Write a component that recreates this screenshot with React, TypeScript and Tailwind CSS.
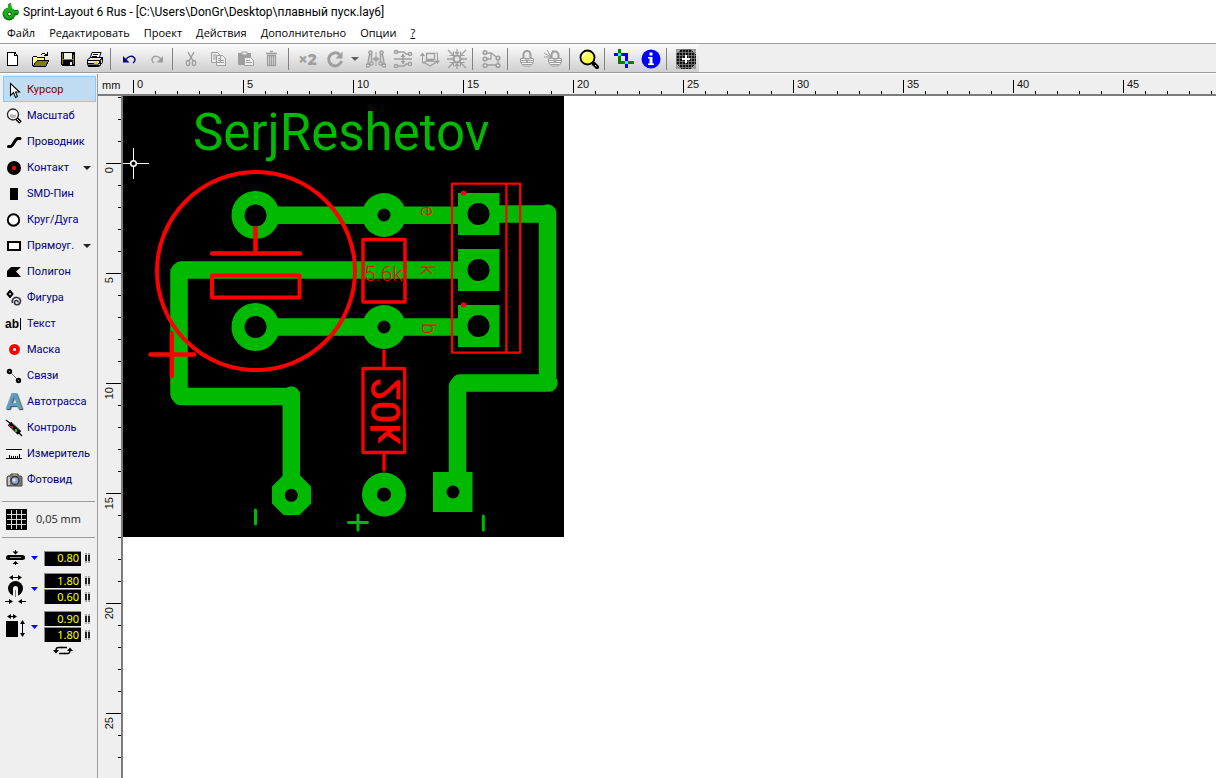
import React from 'react';
import clsx from 'clsx';

const GREEN = '#00b900';
const RED = '#ff0000';
const GREY = '#9e9e9e';

const MENU = ['Файл', 'Редактировать', 'Проект', 'Действия', 'Дополнительно', 'Опции'];

interface IIconProps {
  size?: number;
  crisp?: boolean;
  children: React.ReactNode;
}

const Icon: React.FC<IIconProps> = ({ size = 20, crisp = false, children }) => (
  <svg
    width={size}
    height={size}
    viewBox={`0 0 ${size} ${size}`}
    fill="none"
    stroke="none"
    shapeRendering={crisp ? 'crispEdges' : 'auto'}
    aria-hidden="true"
    className="shrink-0"
  >
    {children}
  </svg>
);

/* ---------- toolbar icons, 20x20 ---------- */

const NewIcon = () => (
  <Icon crisp>
    <path d="M4 4h7l3 3v9H4z" fill="#fff" />
    <path d="M4 3h8v1H4zM3 3h1v13H3zM3 16h11v1H3zM13 7h1v9h-1zM10 4h1v3h-1zM11 4h1v1h-1zM12 5h1v2h-1zM11 6h3v1h-3z" fill="#000" />
  </Icon>
);

const OpenIcon = () => (
  <Icon crisp>
    <path d="M2 8h4l1 1h7v3H7l-5 5z" fill="#ffff80" />
    <path d="M6 12h12l-3 5H3z" fill="#808000" />
    <path d="M2 7h4v1H2zM1 8h1v9H1zM6 8h8v1H6zM13 8h1v4h-1zM6 11h12v1H6zM2 17h13v1H2zM5 12h1v1H5zM4 13h1v1H4zM3 14h1v2H3zM2 16h1v1H2zM17 12h1v1h-1zM16 13h1v2h-1zM15 15h1v2h-1z" fill="#000" />
    <path d="M10 5h1v1h-1zM11 4h3v1h-3zM14 5h1v1h-1zM13 6h4v1h-4zM16 3h1v4h-1zM15 5h1v1h-1z" fill="#000" />
  </Icon>
);

const SaveIcon = () => (
  <Icon crisp>
    <path d="M3 3h14v14H4l-1-1z" fill="#000" />
    <path d="M4 4h1v11H4zM15 6h1v9h-1zM5 10h10v1H5z" fill="#808000" />
    <path d="M6 4h8v6H6z" fill="#efefef" />
    <path d="M12 13h2v3h-2z" fill="#efefef" />
  </Icon>
);

const PrintIcon = () => (
  <Icon>
    <path d="M7 3.5h9l-2 6H5z" fill="#fff" stroke="#000" />
    <path d="M8 5.5h5M7 7.5h5" stroke="#000" />
    <path d="M2.5 10.5l3-2h12l-2 3v5l-2 1h-10l-1-2z" fill="#e5e5e5" stroke="#000" />
    <path d="M2.5 11.5h12v3h-12M14.5 11.5l3-3v5l-3 3" stroke="#000" />
    <path d="M9 13h4v2H9z" fill="#d9d900" />
    <path d="M3 16.5h11" stroke="#000" strokeWidth="2" />
  </Icon>
);

const UndoIcon = () => (
  <Icon>
    <path d="M6 10.5c2-3.5 6-4 8-2s1 4-1 5.5" stroke="#000080" strokeWidth="1.4" />
    <path d="M3 7v6.500h6.500z" fill="#000080" />
  </Icon>
);

const RedoIcon = () => (
  <Icon>
    <path d="M14 10.5c-2-3.500-6-4-8-2s-1 4 1 5.500" stroke={GREY} strokeWidth="1.4" />
    <path d="M16 7v6.500h-6.500z" fill={GREY} />
  </Icon>
);

const CutIcon = () => (
  <Icon>
    <path d="M6 3l5 9M12 3l-5 9" stroke={GREY} strokeWidth="1.5" />
    <ellipse cx="6" cy="14" rx="1.7" ry="2.5" stroke={GREY} strokeWidth="1.3" />
    <ellipse cx="12" cy="14" rx="1.7" ry="2.5" stroke={GREY} strokeWidth="1.3" />
  </Icon>
);

const CopyIcon = () => (
  <Icon>
    <path d="M2.5 3.5h6l3 3v7h-9zM7.5 6.5h6l3 3v7h-9z" fill="#ededed" stroke={GREY} />
    <path d="M4 6h3M4 8h3M4 10h3M9 9.5h3M9 11.5h6M9 13.5h6" stroke={GREY} />
  </Icon>
);

const PasteIcon = () => (
  <Icon>
    <path d="M2 4h13v12H2z" fill={GREY} />
    <path d="M6 3h5v3H6z" fill="#ededed" stroke={GREY} />
    <path d="M8.5 8.5h6l3 3v5h-9z" fill="#ededed" stroke={GREY} />
    <path d="M10 11.5h4M10 13.5h6" stroke={GREY} />
  </Icon>
);

const TrashIcon = () => (
  <Icon>
    <path d="M3 4.5h11M7 2.5h3M4 6.5h9" stroke={GREY} strokeWidth="1.5" />
    <path d="M4.5 7v9.5h8V7M6.5 7v9M8.5 7v9M10.5 7v9" stroke={GREY} strokeWidth="1.3" />
  </Icon>
);

const RotateIcon = () => (
  <Icon>
    <path d="M14.5 5.500A6.500 6.500 0 1 0 16.500 12" stroke={GREY} strokeWidth="3" />
    <path d="M17.500 2.500v7h-7z" fill={GREY} />
  </Icon>
);

const MirrorHIcon = () => (
  <Icon>
    <path d="M4 4c-1 4-2 8-2 11M5.5 5v9M16 4c1 4 2 8 2 11M14.5 5v9" stroke={GREY} strokeWidth="1.5" />
    <g stroke={GREY} strokeWidth="1.5" fill="#efefef">
      <circle cx="4.5" cy="3.500" r="1.6" />
      <circle cx="15.5" cy="3.500" r="1.6" />
      <circle cx="2" cy="16.500" r="1.6" />
      <circle cx="5.5" cy="14.500" r="1.6" />
      <circle cx="18" cy="16.500" r="1.6" />
      <circle cx="14.5" cy="14.500" r="1.6" />
    </g>
    <path d="M10 3v14M7 10h6" stroke={GREY} />
    <path d="M9.500 7.500v5L6.500 10zM10.500 7.500v5l3-2.500z" fill={GREY} />
  </Icon>
);

const MirrorVIcon = () => (
  <Icon>
    <path d="M3 3h8l2 2h3M3 17h8l2-2h3M1 10h18M10 5v10" stroke={GREY} strokeWidth="1.5" />
    <g stroke={GREY} strokeWidth="1.5" fill="#efefef">
      <circle cx="3" cy="3" r="1.6" />
      <circle cx="17" cy="5" r="1.6" />
      <circle cx="3" cy="17" r="1.6" />
      <circle cx="17" cy="15" r="1.6" />
    </g>
    <path d="M7.5 8h5L10 5zM7.5 12h5L10 15z" fill={GREY} />
  </Icon>
);

const FlipIcon = () => (
  <Icon>
    <path d="M6.5 4.5h8v6h-8zM4 13.5l6 3.500 6-3.500-3-1.500H7z" stroke={GREY} strokeWidth="1.3" />
    <path d="M2.5 5v9h2M17.5 14V4h-2" stroke={GREY} />
    <path d="M0 7l2.500-3.500L5 7zM15 11.500h5L17.500 15z" fill={GREY} />
  </Icon>
);

const SnapIcon = () => (
  <Icon>
    <path d="M0 10h6M14 10h6" stroke={GREY} strokeWidth="1.5" />
    <circle cx="10" cy="10" r="3.5" stroke={GREY} strokeWidth="2.2" />
    <path d="M1 1l5 5M6.500 2.500v4h-4M19 1l-5 5M13.500 2.500v4h4M1 19l5-5M2.500 13.500h4v4M19 19l-5-5M17.500 13.500h-4v4M10 0v5M8 3l2 2 2-2M10 20v-5M8 17l2-2 2 2" stroke={GREY} strokeWidth="1.2" />
  </Icon>
);

const NetIcon = () => (
  <Icon>
    <path d="M4 4h5l7 5v7H4M4 10h5V4" stroke={GREY} strokeWidth="1.3" />
    <g stroke={GREY} strokeWidth="1.6" fill="#efefef">
      <circle cx="3" cy="3.500" r="1.8" />
      <circle cx="3" cy="10" r="1.8" />
      <circle cx="3" cy="16.500" r="1.8" />
      <circle cx="16" cy="9" r="1.8" />
      <circle cx="16" cy="16.500" r="1.8" />
    </g>
  </Icon>
);

const LockIcon = () => (
  <Icon>
    <path d="M6.500 9V5.500a3.500 3.500 0 0 1 7 0V9" stroke={GREY} strokeWidth="2" />
    <path d="M3.500 9.500h13v4l-3 3.500h-7l-3-3.500z" fill="#f4f4f4" stroke={GREY} />
    <path d="M4 11.500h12M4 13.500h12M6 15.500h8" stroke={GREY} />
    <path d="M8 10.500h4l-2 4z" fill={GREY} />
  </Icon>
);

const UnlockIcon = () => (
  <Icon>
    <path d="M7.500 9V6a3.500 3.500 0 0 1 7 0v3" stroke={GREY} strokeWidth="2" />
    <path d="M4.500 9.500h13v4l-3 3.500h-7l-3-3.500z" fill="#f4f4f4" stroke={GREY} />
    <path d="M5 11.500h12M5 13.500h12M7 15.500h8M0 4l7 4M3 1l4 7M0 8h7M9 1L7 8" stroke={GREY} />
    <path d="M9 10.500h4l-2 4z" fill={GREY} />
  </Icon>
);

const ZoomIcon = () => (
  <Icon>
    <path d="M14.500 14.500l3.500 3.500" stroke="#000" strokeWidth="4" strokeLinecap="round" />
    <path d="M16 16l1.500 1.500" stroke="#fff" />
    <circle cx="8.500" cy="8.500" r="7" fill="#ffff50" stroke="#000" strokeWidth="1.8" />
    <path d="M4 8a5 5 0 0 1 4-4" stroke="#fff" strokeWidth="1.5" />
  </Icon>
);

const CrossIcon = () => (
  <Icon crisp>
    <path d="M4 0h3v12h13v3H4z" fill="#008000" />
    <path d="M0 4h14v15h-3V7H0z" fill="#0000ff" />
    <path d="M4 4h3v3H4zM11 12h3v3h-3z" fill="#00ffff" />
  </Icon>
);

const InfoIcon = () => (
  <Icon>
    <circle cx="10" cy="10" r="9.500" fill="#0000ff" />
    <path d="M8.500 3.500h3v3h-3zM7 8h4.500v6.500H13V16H7v-1.500h1.500v-5H7z" fill="#fff" />
  </Icon>
);

const RASTER_LINES = [0, 3, 6, 9, 12, 15, 18];

const RasterIcon = () => (
  <Icon crisp>
    <path d="M0 0h20v20H0z" fill="#a8a8a8" />
    <path d="M6 0h8l3 2 3 4v8l-3 4-3 2H6l-3-2-3-4V6l3-4z" fill="#101010" />
    {RASTER_LINES.map((p) => (
      <path key={p} d={`M${p} 0h1v20h-1zM0 ${p}h20v1H0z`} fill="#8c8c8c" fillOpacity="0.7" />
    ))}
    <path d="M9 6h2v8H9zM6 9h8v2H6z" fill="#fff" />
  </Icon>
);

/* ---------- side bar icons, 18x18 ---------- */

const CursorIcon = () => (
  <Icon size={18}>
    <path d="M5.500 2.500v12l3-3 2 5 2-1-2-4.500h4z" fill="#fff" stroke="#000" strokeWidth="1.1" />
  </Icon>
);

const LoupeIcon = () => (
  <Icon size={18}>
    <path d="M11.500 11.500l4 4" stroke="#000" strokeWidth="3.500" />
    <path d="M12 12l3 3" stroke="#fff" />
    <circle cx="8" cy="7.500" r="5.500" fill="#fff" stroke="#222" strokeWidth="1.3" />
    <path d="M4.500 8l2-1 3 1 2-1-1 3.500-2.500 1-2.500-1z" fill="#b8b8b8" />
  </Icon>
);

const TrackIcon = () => (
  <Icon size={18}>
    <path d="M3.500 13.500h2.500C9 12 9 7 12.500 5.500H15" stroke="#000" strokeWidth="3" strokeLinecap="round" />
  </Icon>
);

const PadIcon = () => (
  <Icon size={18}>
    <circle cx="9" cy="9" r="7" fill="#000" />
    <circle cx="9" cy="9" r="2.2" fill={RED} />
  </Icon>
);

const SmdIcon = () => (
  <Icon size={18} crisp>
    <path d="M5 3h8v12H5z" fill="#000" />
  </Icon>
);

const CircleIcon = () => (
  <Icon size={18}>
    <circle cx="8.500" cy="9" r="5.700" fill="#fff" stroke="#000" strokeWidth="1.9" />
  </Icon>
);

const RectIcon = () => (
  <Icon size={18} crisp>
    <path d="M3 5h12v8H3z" fill="#fff" stroke="#000" strokeWidth="2" />
  </Icon>
);

const PolygonIcon = () => (
  <Icon size={18}>
    <path d="M6 4h10l-5 4.500 5 5.500H2V8z" fill="#000" />
  </Icon>
);

const FigureIcon = () => (
  <Icon size={18}>
    <path d="M5 2l2.500 3L5 8 2.500 5z" fill="#fff" stroke="#000" strokeWidth="2" />
    <path d="M7.500 14c-1-3.500 1.500-6 4.500-5.500s4.500 3 3 5.500-5.500 2.500-5.500-.5 4-2.500 3.500 0" stroke="#334" strokeWidth="1.6" />
  </Icon>
);

const TextIcon = () => (
  <span className="flex h-3 w-4 shrink-0 items-center border-r border-black font-['Liberation_Sans'] text-xs font-bold text-black">
    ab
  </span>
);

const MaskIcon = () => (
  <Icon size={18}>
    <circle cx="9.500" cy="8.500" r="6.500" fill="#fff" />
    <circle cx="9.500" cy="8.500" r="3.500" fill="#fff" stroke={RED} strokeWidth="4" />
  </Icon>
);

const LinksIcon = () => (
  <Icon size={18}>
    <path d="M4.500 4.500l9 9" stroke="#777" />
    <circle cx="4.500" cy="4.500" r="1.7" fill="#999" stroke="#000" strokeWidth="2" />
    <circle cx="13.500" cy="13.500" r="1.7" fill="#999" stroke="#000" strokeWidth="2" />
  </Icon>
);

const AutorouteIcon = () => (
  <span className="w-[18px] shrink-0 text-center font-['DejaVu_Sans'] text-[22px] leading-none font-bold text-[#5b9cc9] [text-shadow:1px_1px_1px_#444]">
    A
  </span>
);

const ProbeIcon = () => (
  <Icon size={18}>
    <path d="M1 1l5 4" stroke="#000" strokeWidth="1.3" />
    <path d="M4.500 4.500l10 9.500" stroke="#000" strokeWidth="5" />
    <path d="M4 6l8 9M7 4l9 8" stroke="#777" />
    <path d="M13 13l4 4" stroke="#000" strokeWidth="1.5" />
    <path d="M6 7h2v2H6z" fill={RED} />
    <path d="M10 10h2v3h-2z" fill="#00d000" />
  </Icon>
);

const MeterIcon = () => (
  <Icon size={18} crisp>
    <path d="M1 4h16v1H1zM1 13h16v1H1zM4 10h1v3H4zM6 11h1v2H6zM8 11h1v2H8zM10 11h1v2h-1zM12 11h1v2h-1zM14 9h1v4h-1z" fill="#000" />
    <path d="M1 5h16v4H1z" fill="#fff" />
  </Icon>
);

const CameraIcon = () => (
  <Icon size={18}>
    <path d="M6 3h7l1 2h2l1 1v9H2V6l1-1h2z" fill="#7d7d78" stroke="#444" />
    <path d="M3 6h2v8H3z" fill="#c5c5b8" />
    <circle cx="10" cy="9.500" r="4" fill="#8fa8d0" stroke="#333" strokeWidth="1.3" />
    <circle cx="9" cy="9" r="1.5" fill="#dce8ff" />
    <path d="M8 4h4" stroke="#e0b050" />
  </Icon>
);

interface ITool {
  label: string;
  icon: React.FC;
  hasMenu?: boolean;
}

const TOOLS: ITool[] = [
  { label: 'Курсор', icon: CursorIcon },
  { label: 'Масштаб', icon: LoupeIcon },
  { label: 'Проводник', icon: TrackIcon },
  { label: 'Контакт', icon: PadIcon, hasMenu: true },
  { label: 'SMD-Пин', icon: SmdIcon },
  { label: 'Круг/Дуга', icon: CircleIcon },
  { label: 'Прямоуг.', icon: RectIcon, hasMenu: true },
  { label: 'Полигон', icon: PolygonIcon },
  { label: 'Фигура', icon: FigureIcon },
  { label: 'Текст', icon: TextIcon },
  { label: 'Маска', icon: MaskIcon },
  { label: 'Связи', icon: LinksIcon },
  { label: 'Автотрасса', icon: AutorouteIcon },
  { label: 'Контроль', icon: ProbeIcon },
  { label: 'Измеритель', icon: MeterIcon },
  { label: 'Фотовид', icon: CameraIcon },
];

const Separator = () => <div className="mr-[5px] ml-[2px] h-[22px] w-px shrink-0 bg-[#808080]" />;

interface IToolButtonProps {
  title: string;
  children: React.ReactNode;
}

const ToolButton: React.FC<IToolButtonProps> = ({ title, children }) => (
  <button type="button" aria-label={title} className="flex h-6 w-[27px] shrink-0 items-center justify-center">
    {children}
  </button>
);

const Toolbar = () => (
  <div className="flex h-[30px] shrink-0 border-t border-b border-[#9c9c9c] bg-[#efefef]">
    <div className="flex items-center bg-linear-to-b from-[#fcfcfc] to-[#cfcfcf] pt-[2px]">
      <ToolButton title="Новый"><NewIcon /></ToolButton>
      <ToolButton title="Открыть"><OpenIcon /></ToolButton>
      <ToolButton title="Сохранить"><SaveIcon /></ToolButton>
      <ToolButton title="Печать"><PrintIcon /></ToolButton>
      <Separator />
      <ToolButton title="Отменить"><UndoIcon /></ToolButton>
      <ToolButton title="Повторить"><RedoIcon /></ToolButton>
      <Separator />
      <ToolButton title="Вырезать"><CutIcon /></ToolButton>
      <ToolButton title="Копировать"><CopyIcon /></ToolButton>
      <ToolButton title="Вставить"><PasteIcon /></ToolButton>
      <ToolButton title="Удалить"><TrashIcon /></ToolButton>
      <Separator />
      <ToolButton title="Дублировать">
        <span className="font-['Open_Sans'] text-base leading-none font-extrabold text-[#9e9e9e]">×2</span>
      </ToolButton>
      <ToolButton title="Повернуть"><RotateIcon /></ToolButton>
      <button type="button" aria-label="Угол поворота" className="flex w-[14px] justify-center">
        <svg width="8" height="4" viewBox="0 0 8 4" aria-hidden="true"><path d="M0 0h8L4 4z" fill="#606060" /></svg>
      </button>
      <ToolButton title="Зеркало по горизонтали"><MirrorHIcon /></ToolButton>
      <ToolButton title="Зеркало по вертикали"><MirrorVIcon /></ToolButton>
      <ToolButton title="Сменить сторону"><FlipIcon /></ToolButton>
      <ToolButton title="Привязать к сетке"><SnapIcon /></ToolButton>
      <Separator />
      <ToolButton title="Соединения"><NetIcon /></ToolButton>
      <Separator />
      <ToolButton title="Группировать"><LockIcon /></ToolButton>
      <ToolButton title="Разгруппировать"><UnlockIcon /></ToolButton>
      <Separator />
      <ToolButton title="Масштаб"><ZoomIcon /></ToolButton>
      <Separator />
      <ToolButton title="Обновить"><CrossIcon /></ToolButton>
      <ToolButton title="Информация"><InfoIcon /></ToolButton>
      <Separator />
      <ToolButton title="Шаблон"><RasterIcon /></ToolButton>
    </div>
  </div>
);

interface IValueProps {
  label: string;
  value: string;
}

const ValueField: React.FC<IValueProps> = ({ label, value }) => (
  <div className="flex items-center gap-1">
    <input
      aria-label={label}
      defaultValue={value}
      className="h-[15px] w-[37px] border-t border-l border-t-[#888] border-l-[#888] bg-black pr-[2px] pb-[2px] text-right font-['Noto_Sans'] text-[11px] leading-none text-[#ffff00]"
    />
    <svg width="5" height="10" viewBox="0 0 5 10" shapeRendering="crispEdges" aria-hidden="true">
      <path d="M0 0h2v10H0zM3 0h2v10H3z" fill="#a8a8a8" />
      <path d="M0 2h2v6H0zM3 2h2v6H3z" fill="#222" />
    </svg>
  </div>
);

interface IParamRowProps {
  icon: React.ReactNode;
  title: string;
  fields: IValueProps[];
}

const ParamRow: React.FC<IParamRowProps> = ({ icon, title, fields }) => (
  <div className="flex items-center pl-[5px]">
    <div className="w-[22px]">{icon}</div>
    <button type="button" aria-label={title} className="mr-[6px] ml-1">
      <svg width="7" height="4" viewBox="0 0 7 4" aria-hidden="true"><path d="M0 0h7L3.500 4z" fill="#0000ff" /></svg>
    </button>
    <div className="flex flex-col gap-px">
      {fields.map((field) => (
        <ValueField key={field.label} {...field} />
      ))}
    </div>
  </div>
);

const Sidebar = () => (
  <aside className="flex w-[98px] shrink-0 flex-col border-r border-[#9c9c9c] bg-[#efefef] pt-[2px]">
    <nav>
      {TOOLS.map(({ label, icon: ToolIcon, hasMenu }, index) => (
        <button
          key={label}
          type="button"
          className={clsx(
            "ml-[3px] flex h-[26px] w-[93px] items-center border pt-px pl-px font-['Roboto'] text-[11px] leading-4",
            index === 0 ? 'border-[#90c8f0] bg-[#c0dcf2] text-[#800000]' : 'border-transparent text-[#000080]',
          )}
        >
          <span className="flex w-[18px] shrink-0 items-center">
            <ToolIcon />
          </span>
          <span className="ml-1 whitespace-nowrap">{label}</span>
          {hasMenu && (
            <svg width="8" height="4" viewBox="0 0 8 4" aria-hidden="true" className="mr-1 ml-auto">
              <path d="M0 0h8L4 4z" fill="#222" />
            </svg>
          )}
        </button>
      ))}
    </nav>
    <hr className="mx-[2px] mt-[9px] border-[#9c9c9c]" />
    <button type="button" className="flex h-[35px] items-center gap-[9px] pl-[6px] font-['Open_Sans'] text-[11px] text-[#222]">
      <svg width="21" height="21" viewBox="0 0 21 21" shapeRendering="crispEdges" aria-hidden="true">
        <path d="M0 0h21v21H0z" fill="#000" />
        <path d="M5 1h1v19H5zM10 1h1v19h-1zM15 1h1v19h-1zM1 5h19v1H1zM1 10h19v1H1zM1 15h19v1H1z" fill="#d8d8d8" />
      </svg>
      0,05 mm
    </button>
    <hr className="mx-[2px] border-[#9c9c9c]" />
    <div className="mt-3 flex flex-col gap-[7px]">
      <ParamRow
        title="Ширина дорожки"
        fields={[{ label: 'Ширина', value: '0.80' }]}
        icon={
          <svg width="20" height="16" viewBox="0 0 20 16" aria-hidden="true">
            <rect x="1" y="5" width="19" height="5" rx="2.5" fill="#000" />
            <path d="M5 7.500h11" stroke="#999" />
            <path d="M7.500 1.500h6l-3 3zM7.500 14h6l-3-3z" fill="#000" />
            <path d="M10.500 0v2M10.500 13v2" stroke="#000" />
          </svg>
        }
      />
      <ParamRow
        title="Размер контакта"
        fields={[
          { label: 'Внешний диаметр', value: '1.80' },
          { label: 'Внутренний диаметр', value: '0.60' },
        ]}
        icon={
          <svg width="21" height="30" viewBox="0 0 21 30" aria-hidden="true">
            <path d="M5 3.500h11M0 27.500h6M21 27.500h-6" stroke="#000" />
            <path d="M8 1v5L4 3.500zM13 1v5l4-2.500zM4 25v5l4-2.500zM17 25v5l-4-2.500z" fill="#000" />
            <circle cx="10.500" cy="14.500" r="7.500" fill="#000" />
            <path d="M8 14.500a2.500 2.500 0 0 1 5 0V23H8z" fill="#efefef" />
            <path d="M10.500 16v7" stroke="#777" />
          </svg>
        }
      />
      <ParamRow
        title="Размер SMD"
        fields={[
          { label: 'Ширина SMD', value: '0.90' },
          { label: 'Высота SMD', value: '1.80' },
        ]}
        icon={
          <svg width="21" height="30" viewBox="0 0 21 30" aria-hidden="true">
            <path d="M3 4.500h8M17.500 9v15" stroke="#000" />
            <path d="M6 2v5L2 4.500zM8 2v5l4-2.500zM15 12h5l-2.500-4zM15 21h5l-2.500 4z" fill="#000" />
            <path d="M1 9h12v16H1z" fill="#000" />
          </svg>
        }
      />
    </div>
    <button type="button" aria-label="Поменять местами" className="mt-1 ml-[53px] w-5">
      <svg width="20" height="9" viewBox="0 0 20 9" aria-hidden="true">
        <path d="M9 1.500H5.500Q3 1.500 3 4M11 7.500h3.500q2.500 0 2.500-2.500" fill="none" stroke="#000" strokeWidth="1.3" />
        <path d="M0 4h6L3 7.500zM14 5h6l-3-3.500z" fill="#000" />
        <path d="M6 7.500h6M8 1.500h6" stroke="#000" strokeWidth="1.3" />
      </svg>
    </button>
  </aside>
);

const MINOR = [1, 2, 3, 4];
const STEP = 110;

const HorizontalRuler = () => (
  <div className="flex h-[22px] shrink-0 overflow-hidden border-b-2 border-[#7b7b7b] bg-[#efefef] font-['Liberation_Sans'] text-[11px] leading-none text-[#111]">
    <span className="w-[35px] shrink-0 pt-[6px] pl-1">mm</span>
    {Array.from({ length: Math.ceil((window.innerWidth - 133) / STEP) }, (_, i) => (
      <div key={i} className="relative flex w-[110px] shrink-0 items-end">
        <div className="mb-px h-[13px] w-[22px] border-l border-black" />
        {MINOR.map((m) => (
          <div key={m} className="h-[3px] w-[22px] border-l border-black" />
        ))}
        <span className="absolute top-[5px] left-1">{i * 5}</span>
      </div>
    ))}
  </div>
);

const VerticalRuler = () => (
  <div className="h-full w-[25px] shrink-0 overflow-hidden border-r-2 border-[#7b7b7b] bg-[#efefef] font-['Liberation_Sans'] text-[11px] leading-none text-[#111]">
    <div className="flex h-[67px] flex-col items-end pt-px">
      <div className="h-[22px] w-[3px] border-t border-black" />
      <div className="h-[22px] w-[3px] border-t border-black" />
      <div className="h-[22px] w-[3px] border-t border-black" />
    </div>
    {Array.from({ length: Math.ceil((window.innerHeight - 163) / STEP) }, (_, i) => (
      <div key={i} className="relative flex h-[110px] flex-col items-end">
        <div className="h-[22px] w-[15px] border-t border-black" />
        {MINOR.map((m) => (
          <div key={m} className="h-[22px] w-[3px] border-t border-black" />
        ))}
        <span className="absolute top-1 left-[6px] rotate-180 [writing-mode:vertical-rl]">{i * 5}</span>
      </div>
    ))}
  </div>
);

const RING_PADS = [
  { x: 255.5, y: 215, r: 24 },
  { x: 255.5, y: 327, r: 24 },
  { x: 384, y: 215, r: 22 },
  { x: 384, y: 327, r: 22 },
  { x: 384, y: 494.5, r: 22 },
];

const HOLES = [
  { x: 255.5, y: 215.5, r: 11 },
  { x: 255.5, y: 327, r: 11 },
  { x: 384, y: 215, r: 6.5 },
  { x: 384, y: 327, r: 6.5 },
  { x: 384, y: 494.5, r: 7 },
  { x: 478.5, y: 214, r: 11 },
  { x: 478.5, y: 270, r: 11 },
  { x: 478.5, y: 326, r: 11 },
  { x: 291.3, y: 495.3, r: 6.5 },
  { x: 453, y: 492, r: 6.5 },
];

const Board = () => (
  <svg width="441" height="441" viewBox="123 96 441 441" role="img" aria-label="Плата" className="block">
    <path d="M123 96h441v441H123z" fill="#000" />

    {/* copper */}
    <g fill="none" stroke={GREEN} strokeWidth="17.5" strokeLinecap="round" strokeLinejoin="round">
      <path d="M255 215.300H478M478 214H547.500" />
      <path d="M478 270H181L179 272V394L181 396.500H291M291.300 395V495" />
      <path d="M255 327H478" />
      <path d="M547.500 213V383M549 383H460L457.500 386V492" />
    </g>
    <g fill={GREEN}>
      {RING_PADS.map((pad) => (
        <circle key={`${pad.x}-${pad.y}`} cx={pad.x} cy={pad.y} r={pad.r} />
      ))}
      <path d="M458 193h41.500v42H458zM458 249h41.500v42H458zM458 305h41.500v42H458z" />
      <path d="M433 472h39.500v40H433z" />
      <path d="M283 475.500h17l11 11v17l-11.500 11.500h-16l-11.500-11.500v-17z" />
    </g>
    <g fill="#000">
      {HOLES.map((hole) => (
        <circle key={`${hole.x}-${hole.y}`} cx={hole.x} cy={hole.y} r={hole.r} />
      ))}
    </g>
    <path
      d="M255.500 510v14M348.500 522.500h19M358 515v15M483.300 516v14"
      stroke={GREEN}
      strokeWidth="3"
      strokeLinecap="round"
    />
    <text x="193" y="150" fill={GREEN} fontFamily="Roboto, sans-serif" fontSize="51">
      SerjReshetov
    </text>

    {/* silkscreen */}
    <g fill="none" stroke={RED} strokeLinecap="round" strokeLinejoin="round">
      <circle cx="256" cy="271" r="99" strokeWidth="4" />
      <path d="M255.500 228v25M212 253.500h88M150.500 354.500h43.500M171.800 333v43" strokeWidth="4.5" />
      <path d="M212 275.500h87.500v22H212z" strokeWidth="4" />
      <path d="M363 239.500h42V302h-42z" strokeWidth="3.5" />
      <path d="M363 368.500h41.700v84H363zM384 351v17M384 454v16" strokeWidth="3.3" />
      <path d="M452 183.700h68.200v169H452zM506.400 184v168" strokeWidth="2.2" />
    </g>
    <circle cx="463.500" cy="193" r="2.6" fill={RED} />
    <circle cx="463.500" cy="304.800" r="2.6" fill={RED} />
    <g fill={RED} fontFamily="Roboto, sans-serif">
      <text x="364" y="281" fontSize="21" fontWeight="300">5.6k</text>
      <text transform="matrix(0 1 1 0 400 378)" fontSize="40" fontWeight="500">20k</text>
      <text transform="translate(421 206) rotate(90)" fontSize="20" fontWeight="300">e</text>
      <text transform="translate(421 265) rotate(90)" fontSize="20" fontWeight="300">k</text>
      <text transform="translate(422 323) rotate(90)" fontSize="20" fontWeight="300">b</text>
    </g>

    {/* origin marker */}
    <path d="M123 163.500h26M133.500 148v31" stroke="#fff" />
    <circle cx="133.500" cy="163.500" r="2.8" fill="#000" stroke="#fff" strokeWidth="1.5" />
  </svg>
);

const App: React.FC = () => (
  <div className="flex h-screen flex-col overflow-hidden bg-white text-black">
    <header className="flex h-6 shrink-0 items-center gap-1 pl-[2px] font-['Roboto'] text-xs">
      <svg width="17" height="18" viewBox="0 0 17 18" aria-hidden="true">
        <path d="M6 1l3-1 1 7h6l1 2-1 3-6 1z" fill="#0a7a0a" />
        <circle cx="7" cy="11" r="6.500" fill="#0a7a0a" />
        <circle cx="7" cy="10" r="5.500" fill="#1cae1c" />
        <path d="M6 1h3v6H6zM10 8h6v2h-6z" fill="#1cae1c" />
        <circle cx="7.500" cy="11" r="1.8" fill="#fff" stroke="#064d06" />
      </svg>
      <h1>Sprint-Layout 6 Rus - [C:\Users\DonGr\Desktop\плавный пуск.lay6]</h1>
    </header>
    <div className="flex h-[19px] shrink-0 items-center gap-[14px] pb-px pl-[7px] font-['Open_Sans'] text-[11px]">
      {MENU.map((item) => (
        <button key={item} type="button">{item}</button>
      ))}
      <button type="button" className="underline">?</button>
    </div>
    <Toolbar />
    <div className="flex min-h-0 flex-1 border-t border-white">
      <Sidebar />
      <main className="flex min-w-0 flex-1 flex-col">
        <HorizontalRuler />
        <div className="flex min-h-0 flex-1">
          <VerticalRuler />
          <div className="min-w-0 flex-1 overflow-hidden bg-white">
            <Board />
          </div>
        </div>
      </main>
    </div>
  </div>
);

export default App;
